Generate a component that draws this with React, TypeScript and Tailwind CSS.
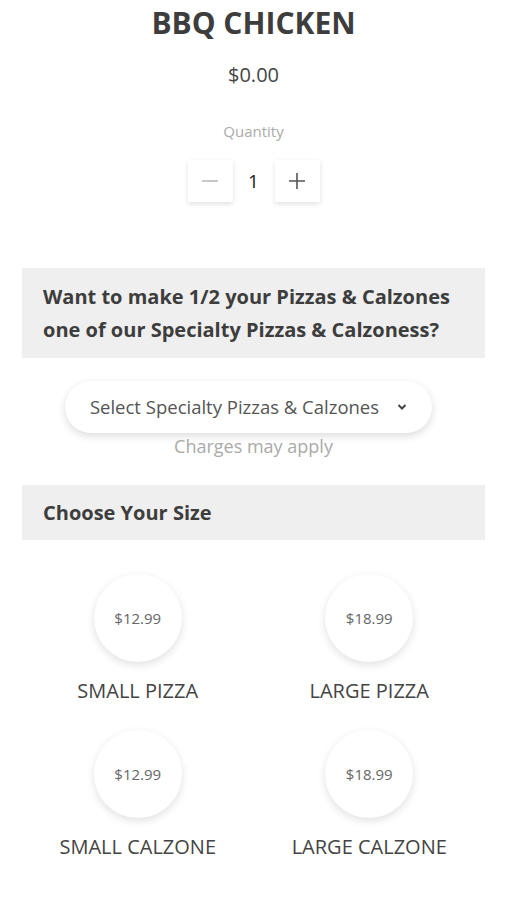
import React from 'react';

const sizes = [
  { price: '$12.99', label: 'SMALL PIZZA' },
  { price: '$18.99', label: 'LARGE PIZZA' },
  { price: '$12.99', label: 'SMALL CALZONE' },
  { price: '$18.99', label: 'LARGE CALZONE' },
];

const SizeOption: React.FC<{ price: string; label: string }> = ({ price, label }) => (
  <div className="flex flex-col items-center">
    <div className="flex h-[88px] w-[88px] items-center justify-center rounded-full bg-white shadow-[0_3px_8px_rgba(0,0,0,0.12)]">
      <span className="text-[15px] text-[#666]">{price}</span>
    </div>
    <div className="mt-[16px] text-[20px] leading-[26px] text-[#444]">{label}</div>
  </div>
);

export default function App() {
  return (
    <div className="min-h-[900px] w-full bg-white font-['Open_Sans',sans-serif] text-[#444]">
      <div className="flex flex-col items-center pt-[3px]">
        <h1 className="text-[30px] font-bold leading-[40px] text-[#3d3d3d]">BBQ CHICKEN</h1>
        <div className="mt-[19px] text-[20px] leading-[26px]">$0.00</div>
        <div className="mt-[33px] text-[15px] leading-[20px] text-[#aaa]">Quantity</div>
        <div className="mt-[19px] flex items-center">
          <button className="flex h-[42px] w-[45px] items-center justify-center bg-white shadow-[0_2px_5px_rgba(0,0,0,0.12)]">
            <svg width="18" height="18" viewBox="0 0 18 18">
              <path d="M1 9h16" stroke="#bbb" strokeWidth="1.6" />
            </svg>
          </button>
          <span className="w-[42px] text-center text-[19px] text-[#222]">1</span>
          <button className="flex h-[42px] w-[45px] items-center justify-center bg-white shadow-[0_2px_5px_rgba(0,0,0,0.12)]">
            <svg width="18" height="18" viewBox="0 0 18 18">
              <path d="M1 9h16M9 1v16" stroke="#555" strokeWidth="1.6" />
            </svg>
          </button>
        </div>
      </div>

      <div className="mx-[22px] mt-[66px] bg-[#efefef] px-[21px] py-[12px] text-[20px] font-bold leading-[33px] text-[#3d3d3d]">
        Want to make 1/2 your Pizzas &amp; Calzones one of our Specialty Pizzas &amp; Calzoness?
      </div>

      <div className="mt-[23px] flex flex-col items-center">
        <div className="pr-[10px]">
          <button className="flex h-[52px] w-[367px] items-center justify-center gap-[18px] rounded-full bg-white text-[18.5px] text-[#555] shadow-[0_3px_8px_rgba(0,0,0,0.14)]">
            <span>Select Specialty Pizzas &amp; Calzones</span>
            <svg width="10" height="8" viewBox="0 0 10 8">
              <path d="M1.5 2l3.5 3.5L8.5 2" fill="none" stroke="#444" strokeWidth="2" />
            </svg>
          </button>
        </div>
        <div className="mt-[1px] text-[18px] leading-[24px] text-[#aaa]">Charges may apply</div>
      </div>

      <div className="mx-[22px] mt-[27px] flex h-[55px] items-center bg-[#efefef] px-[21px] text-[20px] font-bold text-[#3d3d3d]">
        Choose Your Size
      </div>

      <div className="mx-[22px] mt-[34px] grid grid-cols-2 gap-y-[26px]">
        {sizes.map((s) => (
          <SizeOption key={s.label} price={s.price} label={s.label} />
        ))}
      </div>
    </div>
  );
}
